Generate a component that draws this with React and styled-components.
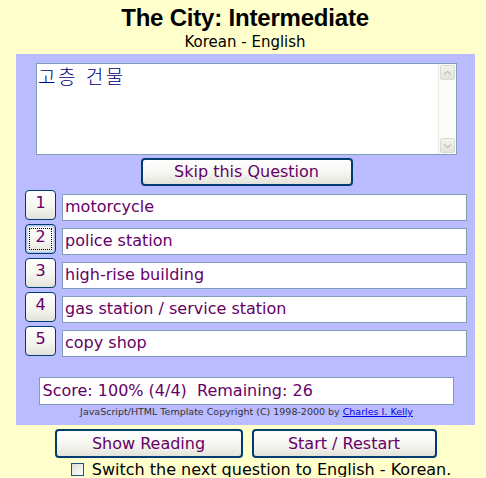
import React, { useState } from 'react'
import styled, { createGlobalStyle } from 'styled-components';

const GlobalStyle = createGlobalStyle`
  html, body {
    margin: 0;
    padding: 0;
    background: #ffffcc;
  }
  body {
    font-family: "DejaVu Sans", "Noto Sans CJK KR", sans-serif;
    color: #000;
  }
`;

const Page = styled.div`
  width: 486px;
  display: flex;
  flex-direction: column;
  align-items: center;
`;

const Title = styled.h1`
  margin: 5px 0 0;
  font-family: "Liberation Sans", Arial, sans-serif;
  font-weight: bold;
  font-size: 24px;
  line-height: 26px;
  letter-spacing: -0.2px;
  margin-left: 4px;
`;

const Subtitle = styled.div`
  font-size: 15px;
  line-height: 18px;
  margin-top: 2px;
  margin-left: 4px;
  margin-bottom: 3px;
`;

const Panel = styled.div`
  width: 459px;
  margin-left: 5px;
  background: #bbbbff;
  padding: 9px 8px 8px 9px;
  box-sizing: border-box;
  display: flex;
  flex-direction: column;
  align-items: center;
`;

const Prompt = styled.div`
  width: 421px;
  height: 92px;
  margin-left: 1px;
  box-sizing: border-box;
  border: 1px solid #7f9db9;
  background: #fff;
  display: flex;
`;

const PromptText = styled.div`
  flex: 1;
  padding: 1px 1px;
  font-family: "Noto Sans CJK KR", "DejaVu Sans", sans-serif;
  font-weight: 300;
  font-size: 19px;
  letter-spacing: 2.5px;
  word-spacing: 1px;
  line-height: 22px;
  color: #000080;
`;

const ScrollBar = styled.div`
  width: 17px;
  background: #fcfcf8;
  border-left: 1px solid #eeede5;
  display: flex;
  flex-direction: column;
  justify-content: space-between;
  padding: 1px 0;
`;

const ScrollArrow = styled.div`
  width: 15px;
  height: 15px;
  margin-left: 1px;
  box-sizing: border-box;
  border: 1px solid #d8dbd0;
  border-radius: 2px;
  background: linear-gradient(#f3f3ee, #e4e3dc);
  display: flex;
  align-items: center;
  justify-content: center;
`;

const Chevron = ({ down }) => (
  <svg width="9" height="6" viewBox="0 0 9 6">
    <path
      d={down ? 'M1 1.5 L4.5 4.5 L8 1.5' : 'M1 4.5 L4.5 1.5 L8 4.5'}
      fill="none"
      stroke="#c2c6c0"
      strokeWidth="1.5"
    />
  </svg>
);

const XpButton = styled.button`
  box-sizing: border-box;
  width: ${(p) => p.w}px;
  height: ${(p) => p.h}px;
  padding: 0;
  border: ${(p) => (p.thick ? 2 : 1)}px solid #003c74;
  border-radius: 4px;
  background: linear-gradient(#ffffff 0%, #f4f4ef 60%, #e3e2da 100%);
  box-shadow: ${(p) => (p.focused ? 'inset 0 0 0 1px #a9c3ea, inset 0 0 0 2px #cfdcf3' : 'none')};
  font-family: "DejaVu Sans", sans-serif;
  font-size: ${(p) => p.fs || 16}px;
  color: ${(p) => p.color || '#660066'};
  cursor: pointer;
  position: relative;
  display: flex;
  align-items: center;
  justify-content: center;
`;

const FocusRing = styled.span`
  position: absolute;
  inset: 3px;
  border: 1px dotted #000;
`;

const SkipButton = styled(XpButton)`
  margin-top: 3px;
  margin-left: 1px;
  padding-bottom: 2px;
`;

const Rows = styled.div`
  align-self: stretch;
  display: flex;
  flex-direction: column;
  gap: 3px;
  margin-top: 4px;
`;

const Row = styled.div`
  display: flex;
  align-items: flex-start;
  gap: 6px;
  height: 31px;
`;

const NumButton = styled(XpButton)`
  color: #660066;
  padding-bottom: 5px;
  align-items: center;
`;

const Answer = styled.div`
  margin-top: 4px;
  width: 405px;
  height: 27px;
  box-sizing: border-box;
  border: 1px solid #7f9db9;
  background: #fff;
  color: #660066;
  font-size: 16px;
  line-height: 24px;
  padding-left: 2px;
  white-space: pre;
`;

const ScoreBox = styled.div`
  margin-top: 20px;
  width: 415px;
  height: 28px;
  box-sizing: border-box;
  border: 1px solid #7f9db9;
  background: #fff;
  color: #660066;
  font-size: 16px;
  line-height: 25px;
  padding-left: 3px;
  white-space: pre;
`;

const Credit = styled.div`
  margin-top: 1px;
  margin-left: 1px;
  font-family: "DejaVu Sans", sans-serif;
  font-size: 9.5px;
  line-height: 11px;
  color: #333;
  white-space: pre;

  a {
    color: #0000ee;
    text-decoration: underline;
  }
`;

const BottomButtons = styled.div`
  display: flex;
  gap: 9px;
  margin-top: 4px;
  margin-left: 5px;
`;

const SwitchRow = styled.label`
  display: flex;
  align-items: center;
  gap: 8px;
  margin-top: 4px;
  margin-left: 36px;
  font-size: 16px;
  line-height: 15px;
  color: #000;
`;

const Box = styled.span`
  width: 11px;
  height: 11px;
  flex-shrink: 0;
  border: 1px solid #1c5180;
  background: linear-gradient(135deg, #dcdcd7, #ffffff);
`;

const answers = [
  'motorcycle',
  'police station',
  'high-rise building',
  'gas station / service station',
  'copy shop',
];

export default function App() {
  const [focused, setFocused] = useState(2);

  return (
    <Page>
      <GlobalStyle />
      <Title>The City: Intermediate</Title>
      <Subtitle>Korean - English</Subtitle>
      <Panel>
        <Prompt>
          <PromptText>고층 건물</PromptText>
          <ScrollBar>
            <ScrollArrow><Chevron /></ScrollArrow>
            <ScrollArrow><Chevron down /></ScrollArrow>
          </ScrollBar>
        </Prompt>
        <SkipButton w={212} h={28} thick>Skip this Question</SkipButton>
        <Rows>
          {answers.map((a, i) => (
            <Row key={a}>
              <NumButton w={31} h={30} focused={focused === i + 1} onClick={() => setFocused(i + 1)}>
                {focused === i + 1 && <FocusRing />}
                {i + 1}
              </NumButton>
              <Answer>{a}</Answer>
            </Row>
          ))}
        </Rows>
        <ScoreBox>{'Score: 100% (4/4)  Remaining: 26'}</ScoreBox>
        <Credit>
          {'JavaScript/HTML Template Copyright (C) 1998-2000 by '}
          <a href="#">Charles I. Kelly</a>
        </Credit>
      </Panel>
      <BottomButtons>
        <XpButton w={188} h={29} thick>Show Reading</XpButton>
        <XpButton w={185} h={29} thick>Start / Restart</XpButton>
      </BottomButtons>
      <SwitchRow>
        <Box />
        Switch the next question to English - Korean.
      </SwitchRow>
    </Page>
  );
}
